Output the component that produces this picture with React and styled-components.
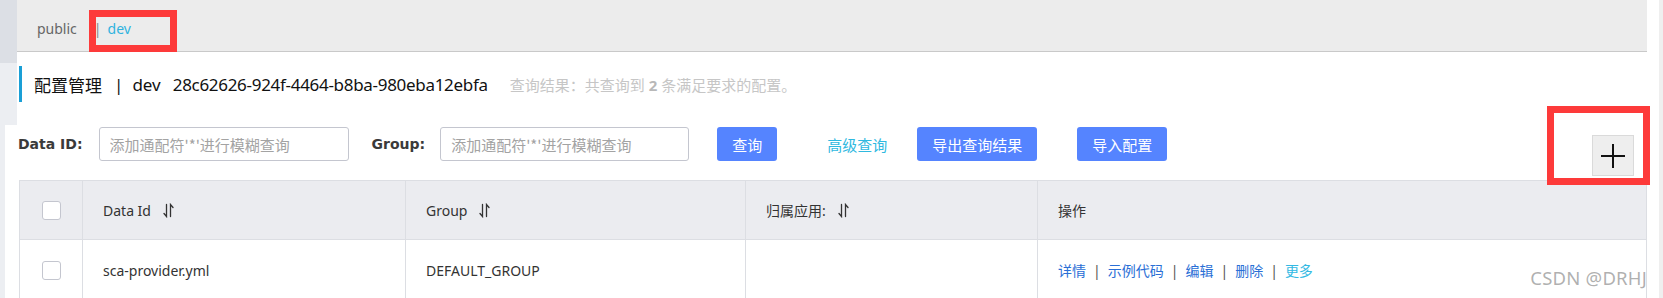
import React from "react";
import styled, { createGlobalStyle } from "styled-components";

const GlobalStyle = createGlobalStyle`
  html, body { margin: 0; padding: 0; background: #fff; }
  body { font-family: "Noto Sans", "Noto Sans CJK SC", sans-serif; }
  * { box-sizing: border-box; }
`;

const Page = styled.div`
  position: relative;
  display: flex;
  width: 1663px;
  height: 298px;
  overflow: hidden;
  background: #fff;
`;

const Sidebar = styled.div`
  width: 17px;
  flex: none;
  display: flex;
  flex-direction: column;
`;

const SideBlock = styled.div`
  height: ${(p) => p.h}px;
  width: ${(p) => p.w || 17}px;
  background: ${(p) => p.bg};
`;

const Main = styled.div`
  flex: 1;
  display: flex;
  flex-direction: column;
  min-width: 0;
`;

const Gutter = styled.div`
  width: 12px;
  flex: none;
  background: #fff;
`;

const Scrollbar = styled.div`
  width: 4px;
  flex: none;
  background: #efefef;
`;

const TabBar = styled.div`
  position: relative;
  height: 52px;
  flex: none;
  background: #ececec;
  border-bottom: 1px solid #c9c9c9;
  display: flex;
  align-items: center;
  padding: 5px 0 0 20px;
`;

const Tab = styled.span`
  font-size: 14px;
  color: ${(p) => (p.active ? "#2fb3df" : "#666")};
`;

const TabDivider = styled.span`
  font-size: 14px;
  color: #888;
  margin: 0 6px 0 17px;
`;

const Highlight = styled.span`
  position: absolute;
  left: ${(p) => p.l}px;
  top: ${(p) => p.t}px;
  width: ${(p) => p.w}px;
  height: ${(p) => p.h}px;
  border: 7px solid #fd3a3a;
  pointer-events: none;
`;

const Content = styled.div`
  padding-left: 1px;
  display: flex;
  flex-direction: column;
`;

const Heading = styled.div`
  margin: 14px 0 0 1px;
  height: 36px;
  border-left: 3px solid #1a9fd6;
  padding-left: 12px;
  display: flex;
  align-items: center;
  font-size: 17px;
  color: #111;
  white-space: nowrap;
`;

const HeadSep = styled.span`
  margin: 0 9px 0 12px;
`;

const Uuid = styled.span`
  margin-left: 12px;
  letter-spacing: -0.3px;
`;

const ResultNote = styled.span`
  margin-left: 22px;
  font-size: 15px;
  color: #c6c6c6;
  b { font-weight: 700; color: #b8b8b8; }
`;

const Toolbar = styled.div`
  margin-top: 25px;
  height: 53px;
  display: flex;
  align-items: flex-start;
`;

const Label = styled.label`
  height: 34px;
  display: flex;
  align-items: center;
  font-family: "DejaVu Sans", sans-serif;
  font-weight: 700;
  font-size: 14px;
  color: #3a3a3a;
  margin-left: ${(p) => p.ml || 0}px;
  margin-right: ${(p) => p.mr || 0}px;
`;

const Input = styled.input`
  width: ${(p) => p.w}px;
  height: 34px;
  border: 1px solid #c4c6cf;
  border-radius: 3px;
  padding: 0 10px;
  font-family: "Noto Sans CJK SC", "Noto Sans", sans-serif;
  font-size: 15px;
  color: #333;
  outline: none;
  &::placeholder { color: #a3a3a3; }
`;

const Button = styled.button`
  height: 34px;
  margin-left: ${(p) => p.ml}px;
  padding: 0 15px;
  border: none;
  border-radius: 3px;
  background: #5584ff;
  color: #fff;
  font-family: "Noto Sans CJK SC", sans-serif;
  font-size: 15px;
  cursor: pointer;
`;

const LinkButton = styled.span`
  height: 34px;
  display: flex;
  align-items: center;
  margin-left: ${(p) => p.ml}px;
  font-family: "Noto Sans CJK SC", sans-serif;
  font-size: 15px;
  color: #2fb9df;
`;

const PlusWrap = styled.div`
  position: relative;
  margin-left: auto;
  margin-right: 13px;
  margin-top: 8px;
`;

const PlusButton = styled.button`
  width: 42px;
  height: 41px;
  display: flex;
  align-items: center;
  justify-content: center;
  background: #eeeeee;
  border: 1px solid #dadada;
  padding: 0;
`;

const Table = styled.div`
  margin-left: 1px;
  border: 1px solid #dcdee3;
  border-bottom: none;
  display: grid;
  grid-template-columns: 63px 323px 340px 292px 1fr;
`;

const Cell = styled.div`
  height: ${(p) => (p.head ? 59 : 60)}px;
  background: ${(p) => (p.head ? "#ebecf0" : "#fff")};
  border-right: ${(p) => (p.last ? "none" : "1px solid #dcdee3")};
  border-bottom: ${(p) => (p.head ? "1px solid #dcdee3" : "none")};
  display: flex;
  align-items: center;
  justify-content: ${(p) => (p.center ? "center" : "flex-start")};
  padding: ${(p) => (p.center ? "0" : "0 0 0 20px")};
  font-size: 14px;
  color: #333;
  white-space: nowrap;
`;

const Checkbox = styled.span`
  width: 19px;
  height: 19px;
  border: 1px solid #c4c6cf;
  border-radius: 3px;
  background: #fff;
  margin-left: 1px;
`;

const SortIcon = styled.svg`
  margin-left: 12px;
  flex: none;
`;

const OpLink = styled.span`
  font-family: "Noto Sans CJK SC", sans-serif;
  color: ${(p) => (p.light ? "#33b9e3" : "#2a6fd6")};
`;

const OpSep = styled.span`
  color: #555;
  margin: 0 7px;
`;

const Watermark = styled.div`
  position: absolute;
  right: 16px;
  bottom: 8px;
  font-size: 18.5px;
  color: rgba(150, 150, 150, 0.75);
  letter-spacing: 0.2px;
  pointer-events: none;
`;

const Sort = () => (
  <SortIcon width="11" height="15" viewBox="0 0 11 15">
    <g stroke="#333" strokeWidth="1.3" fill="none" strokeLinecap="round">
      <path d="M3.5 1.5 V13.5 L1 10.5" />
      <path d="M7.5 13.5 V1.5 L10 4.5" />
    </g>
  </SortIcon>
);

export default function App() {
  return (
    <>
      <GlobalStyle />
      <Page>
        <Sidebar>
          <SideBlock h={63} bg="#dcdfe5" />
          <SideBlock h={62} bg="#eceef2" />
          <SideBlock h={173} w={5} bg="#eceef2" />
        </Sidebar>
        <Main>
          <TabBar>
            <Tab>public</Tab>
            <TabDivider>|</TabDivider>
            <Tab active>dev</Tab>
            <Highlight l={72} t={10} w={88} h={42} />
          </TabBar>
          <Content>
            <Heading>
              <span>配置管理</span>
              <HeadSep>|</HeadSep>
              <span>dev</span>
              <Uuid>28c62626-924f-4464-b8ba-980eba12ebfa</Uuid>
              <ResultNote>
                查询结果：共查询到 <b>2</b> 条满足要求的配置。
              </ResultNote>
            </Heading>
            <Toolbar>
              <Label mr={16}>Data ID:</Label>
              <Input w={250} placeholder="添加通配符'*'进行模糊查询" />
              <Label ml={23} mr={15}>Group:</Label>
              <Input w={249} placeholder="添加通配符'*'进行模糊查询" />
              <Button ml={28}>查询</Button>
              <LinkButton ml={50}>高级查询</LinkButton>
              <Button ml={30}>导出查询结果</Button>
              <Button ml={40}>导入配置</Button>
              <PlusWrap>
                <PlusButton aria-label="add">
                  <svg width="26" height="26" viewBox="0 0 26 26">
                    <path d="M13 1 V25 M1 13 H25" stroke="#111" strokeWidth="2" />
                  </svg>
                </PlusButton>
                <Highlight l={-45} t={-29} w={103} h={79} />
              </PlusWrap>
            </Toolbar>
            <Table>
              <Cell head center><Checkbox /></Cell>
              <Cell head>Data Id<Sort /></Cell>
              <Cell head>Group<Sort /></Cell>
              <Cell head>归属应用:<Sort /></Cell>
              <Cell head last>操作</Cell>

              <Cell center><Checkbox /></Cell>
              <Cell>sca-provider.yml</Cell>
              <Cell>DEFAULT_GROUP</Cell>
              <Cell />
              <Cell last>
                <OpLink>详情</OpLink>
                <OpSep>|</OpSep>
                <OpLink>示例代码</OpLink>
                <OpSep>|</OpSep>
                <OpLink>编辑</OpLink>
                <OpSep>|</OpSep>
                <OpLink>删除</OpLink>
                <OpSep>|</OpSep>
                <OpLink light>更多</OpLink>
              </Cell>
            </Table>
          </Content>
        </Main>
        <Gutter />
        <Scrollbar />
        <Watermark>CSDN @DRHJ</Watermark>
      </Page>
    </>
  );
}
